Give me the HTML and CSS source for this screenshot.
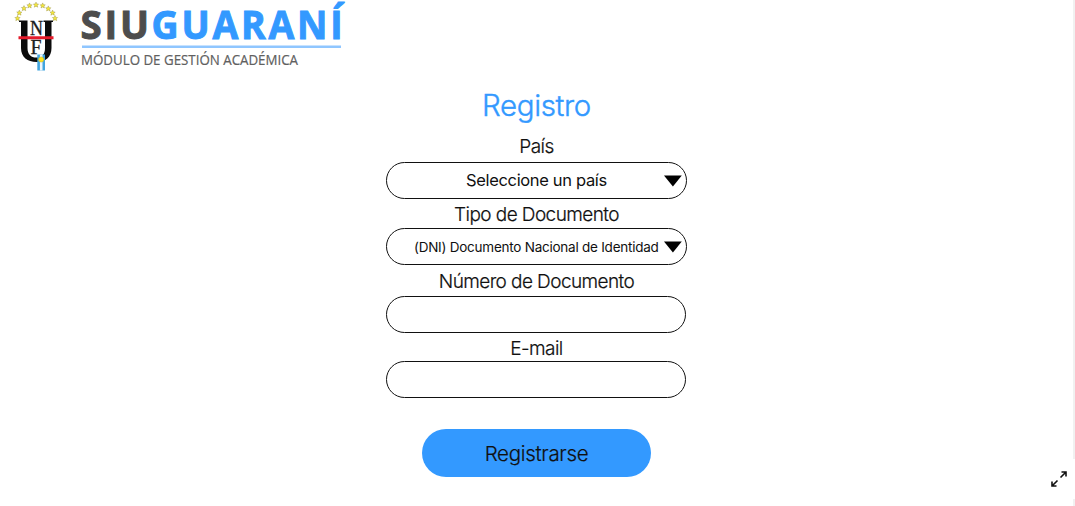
FILE: index.html
```html
<!DOCTYPE html>
<html lang="es">
<head>
<meta charset="utf-8">
<title>SIU Guaraní - Registro</title>
<link rel="stylesheet" href="styles.css">
</head>
<body>
<div class="page">
  <header class="header">
    <svg class="brand" width="350" height="76" viewBox="0 0 350 76" role="img" aria-label="SIU Guaraní">
      <defs>
        <path id="star" d="M0-2.700 .8-.9 2.600-.8 1.300.5 1.700 2.400 0 1.400-1.700 2.400-1.300.5-2.600-.8-.8-.9Z" fill="#f5e83d" stroke="#8f883c" stroke-width=".4"/>
      </defs>
      <use href="#star" x="17.500" y="18.300"/><use href="#star" x="19.300" y="12.800"/>
      <use href="#star" x="24" y="8.300"/><use href="#star" x="29.500" y="5.600"/>
      <use href="#star" x="36" y="4.800"/><use href="#star" x="42.700" y="5.600"/>
      <use href="#star" x="48.300" y="8.600"/><use href="#star" x="52.600" y="12.800"/>
      <use href="#star" x="55" y="18.300"/>
      <path class="crest" d="M19 20.500h8.500V48c0 6 3.200 9.600 9 9.600S45 54 45 48V22h-1.500v-1.500H53V22h-1.500v26c0 9-6 14-15 14s-15.500-5-15.500-14V22H19Z"/>
      <text class="crest-letter" x="30" y="35" textLength="13" lengthAdjust="spacingAndGlyphs">N</text>
      <text class="crest-letter" x="30.500" y="54" textLength="11" lengthAdjust="spacingAndGlyphs">F</text>
      <path d="M18.500 36.300h35v3h-35Z" fill="#e41b2b"/>
      <path d="M37.300 54.500h7.700v16h-7.700Z" fill="#42a5df"/>
      <path d="M39.900 54.500h2.600v16h-2.600Z" fill="#eef7fb"/>
      <circle cx="41.200" cy="59.500" r="2.600" fill="#ffe51a" stroke="#b9aa38" stroke-width=".5"/>
      <text class="name siu" x="80.500" y="38.600" textLength="71.500" lengthAdjust="spacingAndGlyphs">SIU</text>
      <text class="name guarani" x="151.500" y="38.600" textLength="194" lengthAdjust="spacingAndGlyphs">GUARANÍ</text>
      <path d="M82 45.400h259v2.500H82Z" fill="#8fc6ff"/>
      <text class="module" x="81" y="65.200" textLength="217" lengthAdjust="spacingAndGlyphs">MÓDULO DE GESTIÓN ACADÉMICA</text>
    </svg>
  </header>

  <form class="form">
    <h1 class="title">Registro</h1>
    <span class="label pais">País</span>
    <div class="field select"><span class="country">Seleccione un país</span><svg class="arrow" width="18" height="12" viewBox="0 0 18 12"><path d="M0 .5h17.800L8.900 11.500Z"/></svg></div>
    <span class="label tipo">Tipo de Documento</span>
    <div class="field select"><span class="document">(DNI) Documento Nacional de Identidad</span><svg class="arrow" width="18" height="12" viewBox="0 0 18 12"><path d="M0 .5h17.800L8.900 11.500Z"/></svg></div>
    <label class="label numero" for="numero">Número de Documento</label>
    <input class="field" id="numero" type="text">
    <label class="label email" for="email">E-mail</label>
    <input class="field" id="email" type="email">
    <button class="submit" type="button">Registrarse</button>
  </form>

  <div class="edge"></div>
  <div class="expand">
    <svg width="18" height="18" viewBox="0 0 18 18"><path d="M10.500 7.500 16 2M11.500 2H16v4.500M7.500 10.500 2 16M2 11.500V16h4.500"/></svg>
  </div>
</div>
</body>
</html>
```
FILE: styles.css
```css
* { box-sizing: border-box; }
body { margin: 0; background: #fff; color: #101010; font-family: Inter, "Liberation Sans", sans-serif; font-weight: 300; overflow: hidden; }
.page { position: relative; width: 1075px; height: 506px; }
.header { height: 76px; }
.brand { display: block; overflow: visible; }
.crest { fill: #0b0b0b; }
.crest-letter { font: 400 20px "Liberation Serif", serif; fill: #202020; stroke: #202020; stroke-width: .3; }
.name { font: 700 40px "Open Sans", sans-serif; letter-spacing: 3px; stroke-width: 1; }
.siu { fill: #4d4d4d; stroke: #4d4d4d; }
.guarani { fill: #3399ff; stroke: #3399ff; }
.module { font: 400 14.500px "Open Sans", sans-serif; fill: #606060; stroke: #606060; stroke-width: .2; }
.form { width: 301px; margin-left: 386px; display: flex; flex-direction: column; align-items: center; }
.title { margin: 9px 0 0; height: 40px; font-size: 29.500px; line-height: 41px; font-weight: 300; color: #3399ff; letter-spacing: -.35px; -webkit-text-stroke: .4px #3399ff; }
.label { height: 29px; line-height: 29px; font-size: 19px; letter-spacing: -.58px; white-space: nowrap; -webkit-text-stroke: .2px #101010; }
.pais { height: 37px; line-height: 43px; }
.tipo { line-height: 31px; }
.numero { height: 31px; line-height: 34px; }
.email { height: 28px; line-height: 31px; }
.field { display: block; width: 300px; height: 37px; margin: 0 1px 0 0; padding: 0 18px; border: 1px solid #111; border-radius: 19px; background: #fff; font: inherit; outline: 0; }
.select { width: 301px; margin: 0; padding: 0 4px 0 0; display: flex; align-items: center; justify-content: flex-end; white-space: nowrap; }
.country { width: 141px; margin-right: 57px; padding-bottom: 2px; font-size: 16.500px; font-weight: 400; letter-spacing: -.34px; }
.document { width: 245px; margin-right: 5px; font-size: 13.500px; font-weight: 400; letter-spacing: -.24px; }
.arrow { fill: #000; }
.submit { width: 229px; height: 48px; margin: 31px 0 0; padding: 1px 0 0; border: 0; border-radius: 24px; background: #3399ff; color: #101010; font: 300 20.500px Inter, sans-serif; letter-spacing: -.3px; -webkit-text-stroke: .2px #101010; }
.edge { position: absolute; top: 0; right: 0; width: 2px; height: 506px; background: #f1f1f1; }
.expand { position: absolute; right: 0; top: 459px; width: 32px; height: 40px; padding: 11px 0 0 7px; background: #fff; }
.expand svg { display: block; fill: none; stroke: #111; stroke-width: 1.600; }
```
